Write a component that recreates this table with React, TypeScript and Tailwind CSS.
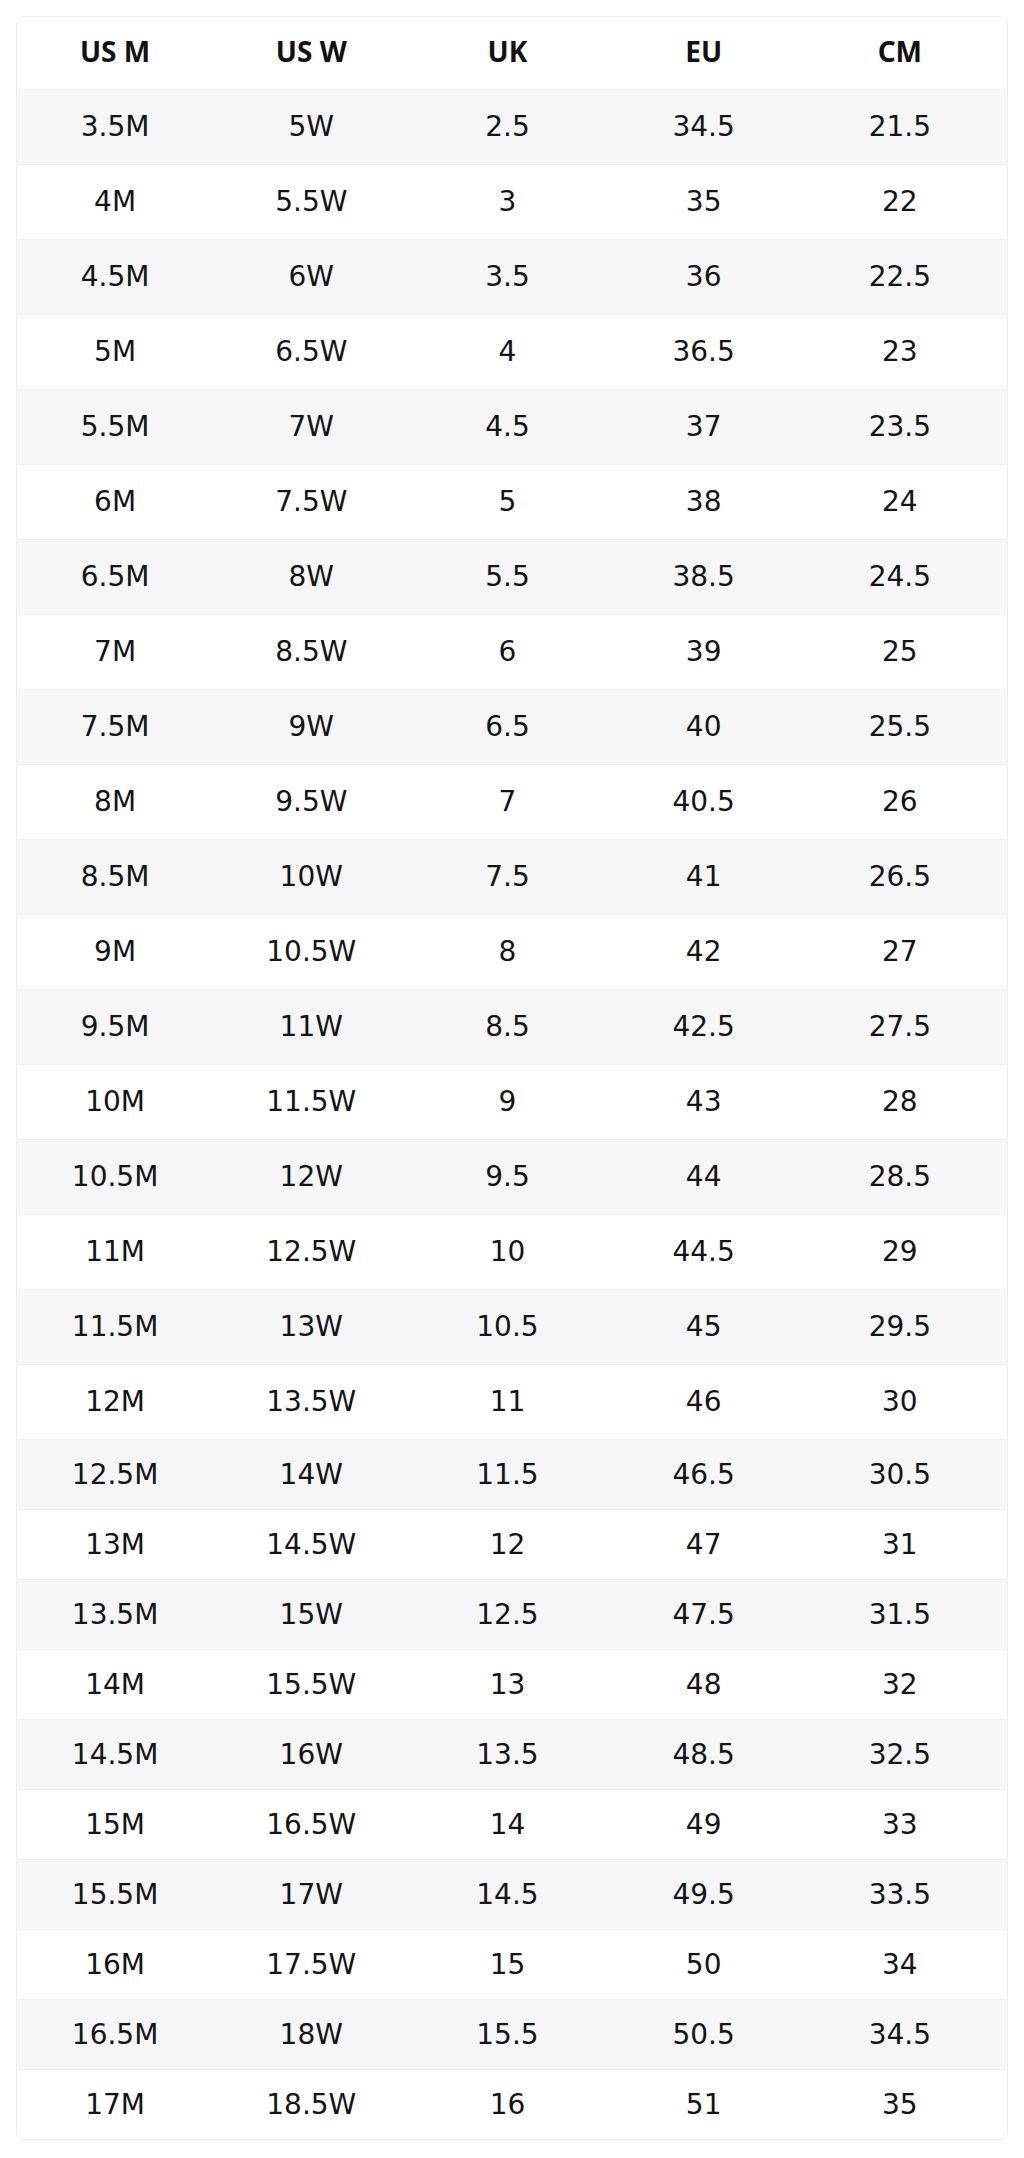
const sizes: [string, string, string, string, string][] = [
    ["3.5M", "5W", "2.5", "34.5", "21.5"],
    ["4M", "5.5W", "3", "35", "22"],
    ["4.5M", "6W", "3.5", "36", "22.5"],
    ["5M", "6.5W", "4", "36.5", "23"],
    ["5.5M", "7W", "4.5", "37", "23.5"],
    ["6M", "7.5W", "5", "38", "24"],
    ["6.5M", "8W", "5.5", "38.5", "24.5"],
    ["7M", "8.5W", "6", "39", "25"],
    ["7.5M", "9W", "6.5", "40", "25.5"],
    ["8M", "9.5W", "7", "40.5", "26"],
    ["8.5M", "10W", "7.5", "41", "26.5"],
    ["9M", "10.5W", "8", "42", "27"],
    ["9.5M", "11W", "8.5", "42.5", "27.5"],
    ["10M", "11.5W", "9", "43", "28"],
    ["10.5M", "12W", "9.5", "44", "28.5"],
    ["11M", "12.5W", "10", "44.5", "29"],
    ["11.5M", "13W", "10.5", "45", "29.5"],
    ["12M", "13.5W", "11", "46", "30"],
    ["12.5M", "14W", "11.5", "46.5", "30.5"],
    ["13M", "14.5W", "12", "47", "31"],
    ["13.5M", "15W", "12.5", "47.5", "31.5"],
    ["14M", "15.5W", "13", "48", "32"],
    ["14.5M", "16W", "13.5", "48.5", "32.5"],
    ["15M", "16.5W", "14", "49", "33"],
    ["15.5M", "17W", "14.5", "49.5", "33.5"],
    ["16M", "17.5W", "15", "50", "34"],
    ["16.5M", "18W", "15.5", "50.5", "34.5"],
    ["17M", "18.5W", "16", "51", "35"],
];

const headers = ["US M", "US W", "UK", "EU", "CM"];

export default function App() {
    return (
        <div className="min-h-[2158px] bg-white p-4">
            <div className="w-[992px] rounded-lg border border-[#ececee] bg-white overflow-hidden">
                {/* header */}
                <div className="grid grid-cols-[repeat(5,196.2px)] h-[72px] items-center pb-[4px] font-['Noto_Sans',sans-serif] text-[28px] font-bold text-[#111113]">
                    {headers.map((h) => (
                        <div key={h} className="text-center">
                            {h}
                        </div>
                    ))}
                </div>

                {sizes.map((row, i) => (
                    <div
                        key={row[0]}
                        className={`grid grid-cols-[repeat(5,196.2px)] items-center border-t border-[#efeff1] font-['DejaVu_Sans',sans-serif] text-[28px] text-[#141416] ${
                            i % 2 === 0 ? "bg-[#f6f6f8]" : "bg-white"
                        } ${i < 18 ? "h-[75px]" : "h-[70px]"}`}
                    >
                        {row.map((cell, j) => (
                            <div key={j} className="text-center">
                                {cell}
                            </div>
                        ))}
                    </div>
                ))}
            </div>
        </div>
    );
}
